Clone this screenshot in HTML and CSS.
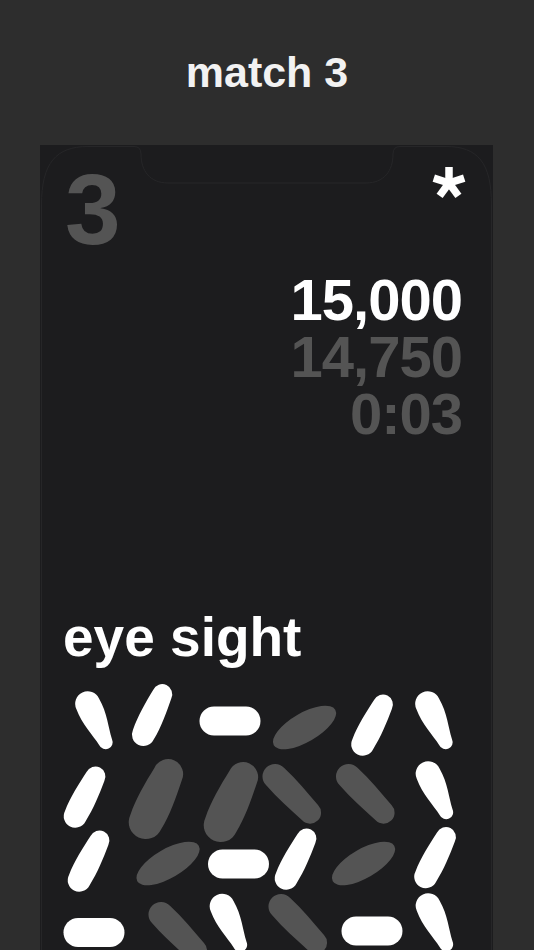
FILE: index.html
```html
<!DOCTYPE html>
<html>
  <head>
    <title>match 3</title>
    <link rel="stylesheet" href="styles.css">
  </head>
  <body>
    <div id="heading">
      <h1>match 3</h1>
    </div>

    <div class="screen">
      <!-- faint outline of the phone display -->
      <svg class="outline" width="453" height="805" viewBox="0 0 453 805">
        <path d="M1.5,805 L1.5,60 C1.5,18 16,1.5 48,1.5 L94,1.5 Q101,1.5 101,9 C101,26 110,38 128,38 L326,38 C344,38 353,26 353,9 Q353,1.5 360,1.5 L406,1.5 C438,1.5 451.5,18 451.5,60 L451.5,805" />
      </svg>

      <div class="top-row">
        <span class="level">3</span>
        <svg class="star" width="34" height="34" viewBox="-17 -17 34 34">
          <line x1="0" y1="0" x2="0" y2="-16" />
          <line x1="0" y1="0" x2="15.2" y2="-4.9" />
          <line x1="0" y1="0" x2="9.4" y2="12.9" />
          <line x1="0" y1="0" x2="-9.4" y2="12.9" />
          <line x1="0" y1="0" x2="-15.2" y2="-4.9" />
        </svg>
      </div>

      <div class="scores">
        <div class="target">15,000</div>
        <div class="dim-text">14,750</div>
        <div class="dim-text">0:03</div>
      </div>

      <div class="bottom">
        <h2 class="game-title">eye sight</h2>
        <svg class="board" width="453" height="270" viewBox="40 680 453 270">
          <defs>
            <path id="tear" d="M-18.5,-12.5 C-2,-14 12,-8.5 24,-7 A7 7 0 0 1 24,7 C12,8.5 -2,14 -18.5,12.5 A12.5 12.5 0 0 1 -18.5,-12.5Z" />
            <path id="pill" d="M-21.5,-11.5 C-7,-13 9,-11.5 23,-10 A10 10 0 0 1 23,10 C9,11.5 -7,13 -21.5,11.5 A11.5 11.5 0 0 1 -21.5,-11.5Z" />
            <rect id="bar" x="-30.5" y="-14.5" width="61" height="29" rx="14.5" />
            <ellipse id="oval" cx="0" cy="0" rx="35.5" ry="14.5" />
            <path id="big" d="M-25.5,-17 C-8,-19 10,-17 27.5,-15 A15 15 0 0 1 27.5,15 C10,17 -8,19 -25.5,17 A17 17 0 0 1 -25.5,-17Z" />
            <path id="bean" d="M-24.5,-12.5 C-7,-13.5 9,-12 26,-11 A11 11 0 0 1 26,11 C9,12 -7,13.5 -24.5,12.5 A12.5 12.5 0 0 1 -24.5,-12.5Z" />
          </defs>

          <!-- row 1 -->
          <use href="#tear" class="light" transform="translate(95.5 720.5) rotate(65)" />
          <use href="#pill" class="light" transform="translate(152.5 715) rotate(-65)" />
          <use href="#bar" class="light" transform="translate(230 721)" />
          <use href="#oval" class="dim" transform="translate(304.5 727.5) rotate(-30)" />
          <use href="#pill" class="light" transform="translate(372.5 725) rotate(-63)" />
          <use href="#tear" class="light" transform="translate(435.5 720.5) rotate(65)" />

          <!-- row 2 -->
          <use href="#pill" class="light" transform="translate(85 797) rotate(-63)" />
          <use href="#big" class="dim" transform="translate(156.5 799) rotate(-65)" />
          <use href="#big" class="dim" transform="translate(231.5 802) rotate(-65)" />
          <use href="#bean" class="dim" transform="translate(292 794) rotate(46)" />
          <use href="#bean" class="dim" transform="translate(365.5 794) rotate(46)" />
          <use href="#tear" class="light" transform="translate(436 790.5) rotate(65)" />

          <!-- row 3 -->
          <use href="#pill" class="light" transform="translate(89 861) rotate(-63)" />
          <use href="#oval" class="dim" transform="translate(168 863.5) rotate(-30)" />
          <use href="#bar" class="light" transform="translate(238.5 864)" />
          <use href="#pill" class="light" transform="translate(296 859) rotate(-63)" />
          <use href="#oval" class="dim" transform="translate(363.5 863.5) rotate(-30)" />
          <use href="#pill" class="light" transform="translate(435.5 857.5) rotate(-63)" />

          <!-- row 4 -->
          <use href="#bar" class="light" transform="translate(94 932.5)" />
          <use href="#bean" class="dim" transform="translate(178 932) rotate(46)" />
          <use href="#tear" class="light" transform="translate(230 923) rotate(65)" />
          <use href="#bean" class="dim" transform="translate(298 924) rotate(46)" />
          <use href="#bar" class="light" transform="translate(372 931)" />
          <use href="#tear" class="light" transform="translate(436 922.5) rotate(65)" />
        </svg>
      </div>
    </div>
  </body>
</html>
```

FILE: styles.css
```css
body {
  margin: 0;
  background-color: #2d2d2d;
  font-family: "Liberation Sans", Arial, sans-serif;
  overflow: hidden;
}

#heading {
  height: 145px;
  padding-top: 51px;
  box-sizing: border-box;
  text-align: center;
}

#heading h1 {
  margin: 0;
  font-size: 43px;
  line-height: 43px;
  font-weight: bold;
  color: #f2f2f2;
}

.screen {
  position: relative;
  display: flex;
  flex-direction: column;
  height: 805px;
  margin: 0 41px 0 40px;
  background-color: #1c1c1e;
  overflow: hidden;
}

.outline {
  position: absolute;
  top: 0;
  left: 0;
  fill: none;
  stroke: #262628;
  stroke-width: 1;
}

.top-row {
  display: flex;
  justify-content: space-between;
  align-items: flex-start;
  padding: 14px 27px 0 25px;
}

.level {
  font-size: 100px;
  line-height: 100px;
  font-weight: bold;
  color: #545454;
}

.star {
  margin-top: 7px;
  stroke: #ffffff;
  stroke-width: 7.5;
}

.scores {
  margin-top: 12px;
  padding-right: 31px;
  text-align: right;
  font-size: 58px;
  line-height: 57px;
  font-weight: bold;
  letter-spacing: -1px;
}

.target {
  color: #ffffff;
}

.dim-text {
  color: #545454;
}

.bottom {
  margin-top: auto;
}

.game-title {
  margin: 0 0 15px 0;
  padding-left: 23px;
  font-size: 55px;
  line-height: 55px;
  font-weight: bold;
  color: #ffffff;
}

.board {
  display: block;
}

.light {
  fill: #ffffff;
}

.dim {
  fill: #545454;
}
```
